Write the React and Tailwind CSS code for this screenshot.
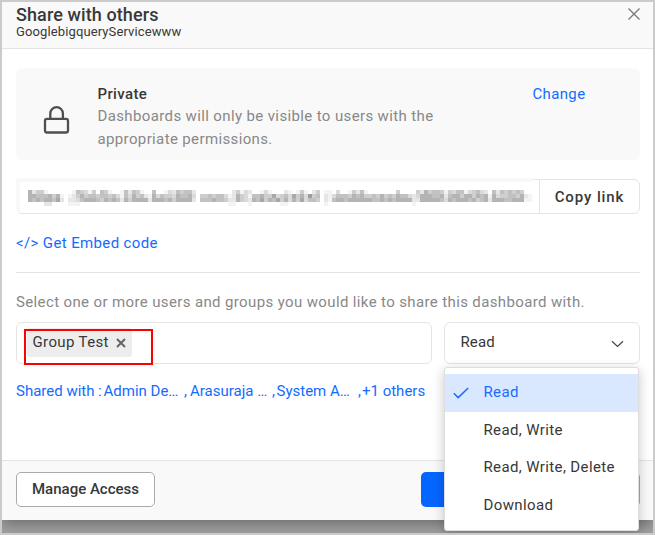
import React from "react";

// Shade levels (0-9) of the redacted link, one list per row of 4px cells.
const MOSAIC = [
  "6244100000 0154314054 1001525410 0500132545 5200000000 0241320013 1000210141 0240110300 1425100000 0040000426 4554143551 3453205254 545400",
  "6655564610 1246455455 4531536452 1635443655 6304454553 1264315564 4734537463 8450213555 4656445464 5465532366 6556256646 6465616344 554621",
  "6565665720 2235666546 5652646666 2666564666 6205556554 2264326574 6574636473 5540215665 6666665565 6566662266 6665365666 5645626665 566611",
  "0000220000 1110000000 0000000000 0000000000 0000000000 1100010000 0001100000 0000100000 0000000000 0000001000 0000000000 0000000000 000000",
];

function RedactedLink() {
  return (
    <svg width="504" height="16" viewBox="0 0 504 16" shapeRendering="crispEdges" aria-hidden="true">
      {MOSAIC.map((row, y) =>
        row
          .replaceAll(" ", "")
          .split("")
          .map((level, x) =>
            level === "0" ? null : (
              <rect key={`${x}-${y}`} x={x * 4} y={y * 4} width="4" height="4" fill="#111" fillOpacity={Number(level) * 0.052} />
            ),
          ),
      )}
    </svg>
  );
}

const options = ["Read", "Read, Write", "Read, Write, Delete", "Download"];

function PermissionSelect() {
  return (
    <div className="relative h-[42px] w-[196px] rounded-md border border-[#e4e4e4] bg-white">
      <div className="flex h-full items-center justify-between pl-[15.5px] pr-[15px]">
        <span className="-mt-[2px] text-[15px] tracking-[0.1px]">Read</span>
        <svg className="mt-[2px]" width="13" height="8" viewBox="0 0 13 8" fill="none" stroke="#444" strokeWidth="1.2">
          <path d="M1 1.2 6.5 6.5 12 1.2" />
        </svg>
      </div>
      <div className="absolute -left-px top-[44px] z-10 h-[164px] w-[195px] rounded-[3px] border border-[#dedede] bg-white pt-[6px] shadow-[0_3px_12px_rgba(0,0,0,0.22)]">
        {options.map((option, i) => (
          <div
            key={option}
            className={
              i === 0
                ? "flex h-[38px] items-center bg-[#dae8ff] text-[15px] tracking-[0.35px] text-[#1b6bff]"
                : "flex h-[37.5px] items-center text-[15px] tracking-[0.38px]"
            }
          >
            <span className="flex w-[38.5px] pl-[7.5px]">
              {i === 0 && (
                <svg width="16" height="12" viewBox="0 0 16 12" fill="none" stroke="#1b6bff" strokeWidth="1.5">
                  <path d="M.8 6.3 5.2 10.6 15.2 1" />
                </svg>
              )}
            </span>
            <span className="-mt-[2px]">{option}</span>
          </div>
        ))}
      </div>
    </div>
  );
}

export default function App() {
  return (
    <div className="h-[535px] w-[655px] overflow-hidden border-2 border-[#cbcbcb] bg-[#a1a2a4] font-[Roboto,sans-serif] text-[#383838]">
      <div className="flex h-[518px] flex-col bg-white shadow-[0_4px_14px_rgba(0,0,0,0.35)]">
        <header className="flex h-[47px] shrink-0 justify-between border-b border-[#e4e4e4] bg-[#f9f9f9] pl-[14px] pr-[13px]">
          <div>
            <h1 className="mt-[2px] h-[20px] text-[18px] leading-[21px] font-medium tracking-[0.1px]">Share with others</h1>
            <p className="text-[13px] leading-[16px] tracking-[0.12px]">GooglebigqueryServicewww</p>
          </div>
          <svg className="mt-[6px]" width="12" height="12" viewBox="0 0 12 12" stroke="#777" strokeWidth="1.3">
            <path d="M.5.5 11.5 11.5M11.5.5.5 11.5" />
          </svg>
        </header>

        <main className="flex h-[411px] shrink-0 flex-col pt-[19px] pr-[13px] pl-[14px]">
          <section className="flex h-[92px] w-[624px] shrink-0 rounded-md bg-[#f9f9f9]">
            <div className="w-[81.5px] shrink-0 pl-[27px] pt-[37px]">
              <svg width="27" height="29" viewBox="0 0 27 29" fill="none" stroke="#4f4f4f" strokeWidth="2.3">
                <rect x="2" y="13.8" width="23" height="13.7" rx="2" />
                <path d="M7.3 13.8V8.5a6.3 6.3 0 0 1 12.6 0V13.8" />
              </svg>
            </div>
            <div className="w-[435px] shrink-0 pt-[15px] text-[15px] leading-[23px] tracking-[0.37px] text-[#888]">
              <h2 className="h-[22px] font-medium text-[#383838]">Private</h2>
              <p className="w-[360px]">Dashboards will only be visible to users with the appropriate permissions.</p>
            </div>
            <a className="pt-[15px] text-[15px] leading-[23px] tracking-[0.35px] text-[#126bff]">Change</a>
          </section>

          <div className="mt-[18px] flex h-[36px] w-[624px] shrink-0">
            <div className="h-[36px] w-[518px] rounded-bl-md border-t-4 border-b border-l-4 border-t-[#f8f8f8] border-b-[#e4e4e4] border-l-[#f8f8f8] pt-[8px] pl-[8px]">
              <RedactedLink />
            </div>
            <div className="mt-px w-[5px] border-t border-b border-[#e4e4e4]" />
            <button className="mt-px h-[35px] w-[101px] rounded-r-md border border-[#e4e4e4] pt-px text-[15px] font-medium tracking-[0.9px] whitespace-nowrap">
              Copy link
            </button>
          </div>

          <a className="mt-[17px] h-[24px] text-[15px] leading-[24px] tracking-[0.37px] text-[#126bff]">&lt;/&gt; Get Embed code</a>
          <hr className="mt-[17px] w-[624px] border-t border-[#e4e4e4]" />
          <p className="mt-[18px] h-[22px] text-[15px] leading-[22px] tracking-[0.37px] whitespace-nowrap text-[#888]">
            Select one or more users and groups you would like to share this dashboard with.
          </p>

          <div className="mt-[9px] flex gap-[12px]">
            <div className="relative h-[42px] w-[416px] rounded-md border border-[#e4e4e4]">
              <div className="mt-[5px] ml-[10px] flex h-[29px] w-[105px] items-center rounded-[3px] bg-[#ededed] pl-[5.5px]">
                <span className="-mt-px text-[15px] tracking-[0.37px]">Group Test</span>
                <svg className="ml-[7px]" width="10" height="10" viewBox="0 0 10 10" stroke="#666" strokeWidth="2">
                  <path d="M1 1 9 9M9 1 1 9" />
                </svg>
              </div>
              <div className="absolute top-[6px] left-[7px] h-[36px] w-[129px] border-2 border-[#f00]" />
            </div>
            <PermissionSelect />
          </div>

          <div className="mt-[16px] flex h-[22px] text-[15px] leading-[22px] whitespace-nowrap text-[#126bff]">
            <span className="w-[82px]">Shared with</span>
            <span className="w-[5.5px]">:</span>
            <span className="w-[80.5px]">Admin De…</span>
            <span className="w-[6px]">,</span>
            <span className="w-[82px]">Arasuraja …</span>
            <span className="w-[4.5px]">,</span>
            <span className="w-[81.5px]">System A…</span>
            <span className="w-[4px]">,</span>
            <span>+1 others</span>
          </div>
        </main>

        <footer className="flex h-[60px] shrink-0 items-start justify-between border-t border-[#e4e4e4] bg-[#f9f9f9] pt-[11px] pr-[13px] pl-[14px]">
          <button className="h-[35px] w-[139px] rounded-[5px] border border-[#aaa] bg-white text-[15px] font-medium whitespace-nowrap">
            Manage Access
          </button>
          <div className="flex gap-[8px]">
            <button className="h-[35px] w-[115px] rounded-[5px] bg-[#0565ff]" aria-label="Share" />
            <button className="h-[35px] w-[96px] rounded-[5px] border border-[#aaa] bg-white" aria-label="Cancel" />
          </div>
        </footer>
      </div>
    </div>
  );
}
